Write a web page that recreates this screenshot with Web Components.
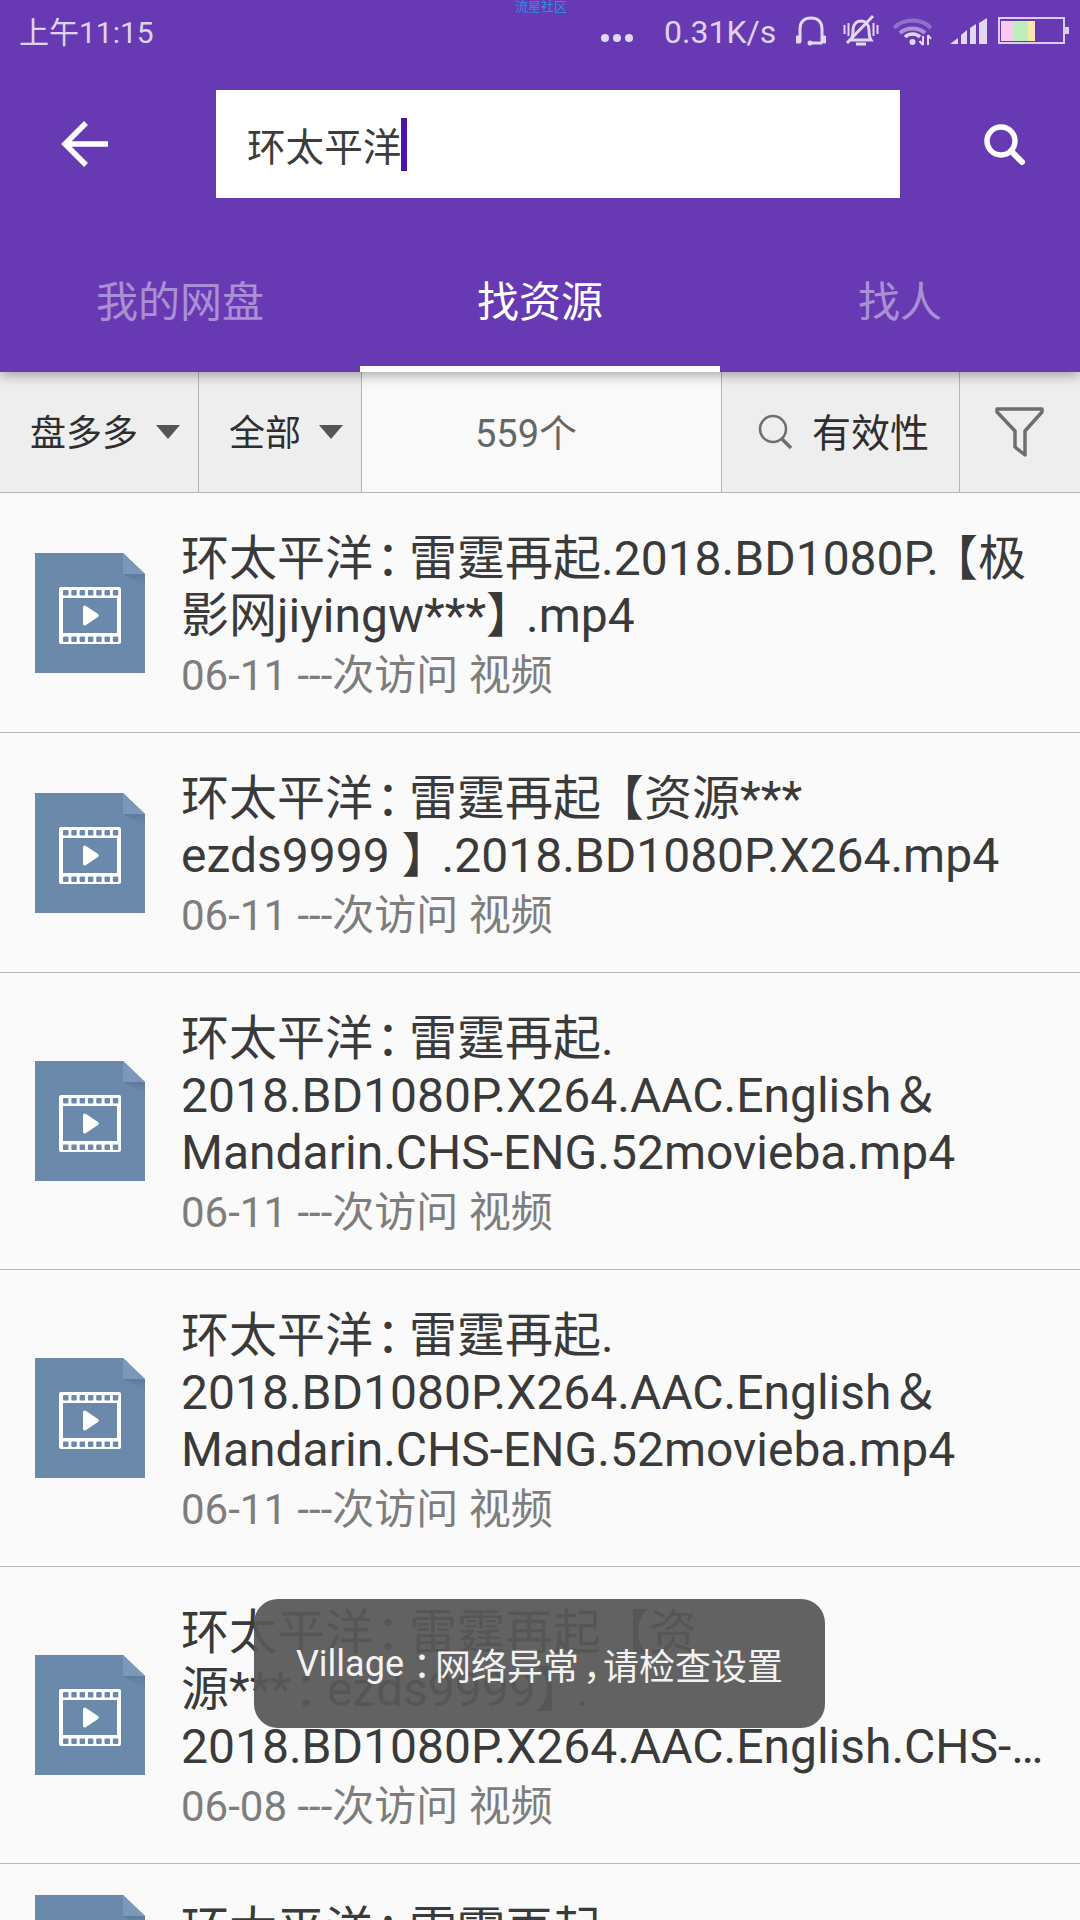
<!DOCTYPE html>
<html lang="zh">
<head>
<meta charset="utf-8">
<title>找资源</title>
<style>
  html, body { margin: 0; padding: 0; }
  body {
    width: 1080px;
    height: 1920px;
    overflow: hidden;
    position: relative;
    background: #fafafa;
    font-family: Roboto, "Noto Sans CJK SC", sans-serif;
  }
</style>
</head>
<body>
<app-header></app-header>
<filter-bar></filter-bar>
<result-list>
  <result-row date="06-11">环太平洋<i>：</i>雷霆再起.2018.BD1080P.<b style="margin-left:-9px;letter-spacing:0">【</b>极<br>影网jiyingw***<b>】</b>.mp4</result-row>
  <result-row date="06-11">环太平洋<i>：</i>雷霆再起<b style="margin-left:-5px;letter-spacing:0">【</b>资源***<br>ezds9999 <b>】</b>.2018.BD1080P.X264.mp4</result-row>
  <result-row date="06-11">环太平洋<i>：</i>雷霆再起.<br>2018.BD1080P.X264.AAC.English＆<br>Mandarin.CHS-ENG.52movieba.mp4</result-row>
  <result-row date="06-11">环太平洋<i>：</i>雷霆再起.<br>2018.BD1080P.X264.AAC.English＆<br>Mandarin.CHS-ENG.52movieba.mp4</result-row>
  <result-row date="06-08">环太平洋<i>：</i>雷霆再起【资<br>源***<i>：</i>ezds9999<b>】</b>.<br>2018.BD1080P.X264.AAC.English.CHS-…</result-row>
  <result-row date="06-08">环太平洋<i>：</i>雷霆再起</result-row>
</result-list>
<toast-message>Village<i>：</i>网络异常<i style="font-family:'Noto Sans CJK SC',sans-serif;margin-left:4px;letter-spacing:-16px">，</i>请检查设置</toast-message>

<script>
// status bar at the very top
class StatusBar extends HTMLElement {
    constructor() {
        super();
        this.attachShadow({ mode: 'open' });
    }

    connectedCallback() {
        this.shadowRoot.innerHTML = `
      <style>
        :host {
          display: flex;
          align-items: center;
          height: 62px;
          padding-left: 19px;
          color: rgba(255,255,255,.8);
          font-size: 32px;
          position: relative;
        }
        .time { flex: 1; font-size: 30px; padding-bottom: 3px; }
        .dots { display: flex; gap: 4px; margin-right: 31px; padding-top: 14px; }
        .dots i { width: 8px; height: 8px; border-radius: 50%; background: rgba(255,255,255,.8); }
        .speed { width: 131px; padding-top: 2px; }
        svg { display: block; flex: none; }
        .mark {
          position: absolute; left: 515px; top: 0;
          font-size: 13px; line-height: 13px; color: #2f8de6;
        }
      </style>
      <span class="mark">流星社区</span>
      <span class="time">上午11:15</span>
      <span class="dots"><i></i><i></i><i></i></span>
      <span class="speed">0.31K/s</span>
      <svg width="32" height="30" viewBox="0 0 32 30" style="margin-right:16px" fill="none" stroke="#e1d8f0" stroke-width="3">
        <path d="M5 26V13C5 6 9 2 16 2s11 4 11 11v13"/>
        <path d="M1.500 20h4v7h-4zM26.500 20h4v7h-4z" fill="#e1d8f0" stroke-width="1"/>
        <path d="M15 27h12" />
        <circle cx="15" cy="27" r="2.500" fill="#e1d8f0" stroke="none"/>
      </svg>
      <svg width="36" height="32" viewBox="0 0 36 32" style="margin-right:14px" fill="none" stroke="#e1d8f0" stroke-width="3">
        <path d="M8 25c2-3 2-6 2-10 0-5 3-9 8-9s8 4 8 9c0 4 0 7 2 10z"/>
        <path d="M4 28 30 1" />
        <path d="M1.500 10v9M5.500 8v13M30.500 8v13M34.500 10v9" stroke-width="2"/>
        <path d="M13 29h10" stroke-width="3"/>
      </svg>
      <svg width="40" height="30" viewBox="0 0 40 30" style="margin-right:17px" fill="none">
        <path d="M1 12C10 2 29 2 38 12" stroke="#8f6fc9" stroke-width="4"/>
        <path d="M7 17c7-6 18-6 25 0" stroke="#e1d8f0" stroke-width="4" opacity=".55"/>
        <path d="M12 21c4-4 11-4 15 0" stroke="#e1d8f0" stroke-width="3.500"/>
        <circle cx="19.500" cy="26" r="3" fill="#e1d8f0"/>
        <path d="M30 20v9M26.500 25l3.500 4M35 29V19M35 19l3 4" stroke="#e1d8f0" stroke-width="2"/>
      </svg>
      <svg width="37" height="26" viewBox="0 0 37 26" style="margin-right:11px" fill="#e1d8f0">
        <path d="M0 26 8 20V26zM11 17l6-5v14h-6zM20 10l6-4v20h-6zM29 5l8-5v26h-8z"/>
      </svg>
      <svg width="71" height="28" viewBox="0 0 71 28" style="margin-right:11px">
        <rect x="1" y="1" width="65" height="25" fill="none" stroke="#d9cdee" stroke-width="2"/>
        <rect x="67" y="10" width="4" height="7" fill="#d9cdee"/>
        <rect x="3" y="4" width="13" height="20" fill="#fcc8f0"/>
        <rect x="16" y="4" width="14" height="20" fill="#bdefbc"/>
        <rect x="30" y="4" width="7" height="20" fill="#fce6a9"/>
      </svg>`;
    }
}

// purple top area: status bar, search box, tabs
class AppHeader extends HTMLElement {
    constructor() {
        super();
        this.attachShadow({ mode: 'open' });
    }

    connectedCallback() {
        this.shadowRoot.innerHTML = `
      <style>
        :host {
          display: block;
          height: 372px;
          background: #673ab4;
          box-shadow: 0 3px 12px rgba(0,0,0,.35);
          position: relative;
          z-index: 2;
        }
        .search {
          display: flex;
          align-items: center;
          height: 108px;
          margin-top: 28px;
        }
        .back { width: 216px; box-sizing: border-box; padding-left: 60px; }
        svg { display: block; }
        .box {
          width: 684px;
          height: 108px;
          box-sizing: border-box;
          padding-left: 31px;
          background: #fff;
          display: flex;
          align-items: center;
          font-size: 38.600px;
          color: #3c3c3c;
        }
        .caret { width: 6px; height: 53px; background: #4a14ac; }
        .go { padding-left: 83px; }
        .tabs { display: grid; grid-template-columns: repeat(3, 360px); margin-top: 42px; }
      </style>
      <status-bar></status-bar>
      <div class="search">
        <div class="back">
          <svg width="48" height="48" viewBox="0 0 48 48" fill="none" stroke="#fff" stroke-width="5.500">
            <path d="M26 3 5 24 26 45M5 24H48"/>
          </svg>
        </div>
        <div class="box">环太平洋<span class="caret"></span></div>
        <div class="go">
          <svg width="42" height="42" viewBox="0 0 42 42" fill="none" stroke="#fff">
            <circle cx="18" cy="18" r="14" stroke-width="5.500"/>
            <path d="M28 28 39 39" stroke-width="6" stroke-linecap="round"/>
          </svg>
        </div>
      </div>
      <div class="tabs">
        <tab-item>我的网盘</tab-item>
        <tab-item active>找资源</tab-item>
        <tab-item>找人</tab-item>
      </div>`;
    }
}

class TabItem extends HTMLElement {
    constructor() {
        super();
        this.attachShadow({ mode: 'open' });
    }

    connectedCallback() {
        this.shadowRoot.innerHTML = `
      <style>
        :host {
          display: flex;
          align-items: center;
          justify-content: center;
          height: 132px;
          box-sizing: border-box;
          padding-bottom: 16px;
          font-size: 42px;
          color: rgba(255,255,255,.45);
        }
        :host([active]) {
          color: #fff;
          border-bottom: 6px solid #fff;
          padding-bottom: 10px;
        }
      </style>
      <slot></slot>`;
    }
}

// sort and filter strip below the tabs
class FilterBar extends HTMLElement {
    constructor() {
        super();
        this.attachShadow({ mode: 'open' });
    }

    connectedCallback() {
        this.shadowRoot.innerHTML = `
      <style>
        :host {
          display: grid;
          grid-template-columns: 199px 163px 360px 238px 120px;
          height: 121px;
          box-sizing: border-box;
          border-bottom: 1px solid #b5b5b5;
          background: #eee;
          font-size: 36px;
          color: #2e2e2e;
        }
        .cell {
          display: flex;
          align-items: center;
          justify-content: center;
          border-right: 1px solid #b5b5b5;
          box-sizing: border-box;
          padding-bottom: 4px;
        }
        .cell:last-child { border-right: 0; }
        .first, .second { justify-content: flex-start; padding-left: 30px; }
        .arrow {
          width: 0; height: 0; margin-left: 18px; margin-top: 4px;
          border-left: 12px solid transparent;
          border-right: 12px solid transparent;
          border-top: 14px solid #555;
        }
        .count {
          background: #f9f9f9;
          color: #666;
          justify-content: flex-start;
          padding-left: 113px;
          font-size: 38px;
        }
        .valid { font-size: 39px; justify-content: flex-start; padding-left: 36px; gap: 20px; }
        svg { display: block; margin-top: 4px; }
      </style>
      <div class="cell first">盘多多<span class="arrow"></span></div>
      <div class="cell second">全部<span class="arrow"></span></div>
      <div class="cell count">559个</div>
      <div class="cell valid">
        <svg width="34" height="36" viewBox="0 0 34 36" fill="none" stroke="#6e6e6e">
          <circle cx="15" cy="15" r="13" stroke-width="2.500"/>
          <path d="M24 25 33 34" stroke-width="3.500"/>
        </svg>
        有效性
      </div>
      <div class="cell">
        <svg width="50" height="52" viewBox="0 0 50 52" fill="none" stroke="#6e6e6e" stroke-width="3.500" stroke-linejoin="round">
          <path d="M2 3H47V6L30 25V49L20 41V25L2 6z"/>
        </svg>
      </div>`;
    }
}

class ResultList extends HTMLElement {
    constructor() {
        super();
        this.attachShadow({ mode: 'open' });
    }

    connectedCallback() {
        this.shadowRoot.innerHTML = `
      <style>
        :host { display: block; }
      </style>
      <slot></slot>`;
    }
}

// blue document icon with film strip
class FileIcon extends HTMLElement {
    constructor() {
        super();
        this.attachShadow({ mode: 'open' });
    }

    connectedCallback() {
        const holes = [0, 1, 2, 3, 4, 5, 6].map(i => {
            const x = 28 + i * 8.3;
            return `<rect x="${x}" y="37" width="5.500" height="5.500" rx="1"/><rect x="${x}" y="83.500" width="5.500" height="5.500" rx="1"/>`;
        }).join('');

        this.shadowRoot.innerHTML = `
      <style>
        :host { display: block; flex: none; width: 110px; height: 120px; }
        svg { display: block; }
      </style>
      <svg width="110" height="120" viewBox="0 0 110 120">
        <defs>
          <linearGradient id="fold" x1="0" y1="0" x2="0" y2="1">
            <stop offset="0" stop-color="#5f7c9d"/>
            <stop offset="1" stop-color="#6b89ab"/>
          </linearGradient>
        </defs>
        <path d="M0 0H88L110 21V120H0z" fill="#6b89ab"/>
        <path d="M88 21H110V33z" fill="url(#fold)"/>
        <path d="M88 0 110 21H88z" fill="#7b98ba"/>
        <rect x="24" y="34" width="62" height="57" rx="2" fill="#fff"/>
        <rect x="28" y="45" width="54" height="35" fill="#6b89ab"/>
        <g fill="#6b89ab">${holes}</g>
        <path d="M48 54a2 2 0 0 1 3-1L63 61a2 2 0 0 1 0 3L51 72a2 2 0 0 1-3-1z" fill="#fff"/>
      </svg>`;
    }
}

class ResultRow extends HTMLElement {
    constructor() {
        super();
        this.attachShadow({ mode: 'open' });
    }

    get date() {
        return this.getAttribute('date') || '';
    }

    connectedCallback() {
        this.shadowRoot.innerHTML = `
      <style>
        :host {
          display: flex;
          align-items: center;
          gap: 36px;
          padding-left: 35px;
          border-bottom: 1px solid #b8b8b8;
          background: #fafafa;
        }
        .text { padding: 37px 0 28px; }
        .title {
          font-size: 48px;
          line-height: 57px;
          color: #3a3a3a;
          white-space: nowrap;
          margin-bottom: 3px;
        }
        ::slotted(i) {
          font-style: normal;
          font-family: "Noto Sans CJK TC", sans-serif;
          margin-left: 3px;
          letter-spacing: -15px;
          line-height: 0;
        }
        ::slotted(b) {
          font-weight: normal;
          letter-spacing: -8px;
        }
        .meta {
          font-size: 42px;
          line-height: 57px;
          color: #7d7d7d;
        }
      </style>
      <file-icon></file-icon>
      <div class="text">
        <div class="title"><slot></slot></div>
        <div class="meta">${this.date} ---次访问 视频</div>
      </div>`;
    }
}

class ToastMessage extends HTMLElement {
    constructor() {
        super();
        this.attachShadow({ mode: 'open' });
    }

    connectedCallback() {
        this.shadowRoot.innerHTML = `
      <style>
        :host {
          position: absolute;
          left: 254px;
          top: 1599px;
          width: 571px;
          height: 129px;
          display: flex;
          align-items: center;
          justify-content: center;
          border-radius: 24px;
          background: rgba(88,88,88,.94);
          color: #f2f2f2;
          font-size: 36px;
          z-index: 5;
        }
        ::slotted(i) {
          font-style: normal;
          font-family: "Noto Sans CJK TC", sans-serif;
          letter-spacing: -5px;
          line-height: 0;
        }
      </style>
      <slot></slot>`;
    }
}

customElements.define('status-bar', StatusBar);
customElements.define('tab-item', TabItem);
customElements.define('app-header', AppHeader);
customElements.define('filter-bar', FilterBar);
customElements.define('result-list', ResultList);
customElements.define('file-icon', FileIcon);
customElements.define('result-row', ResultRow);
customElements.define('toast-message', ToastMessage);
</script>
</body>
</html>
